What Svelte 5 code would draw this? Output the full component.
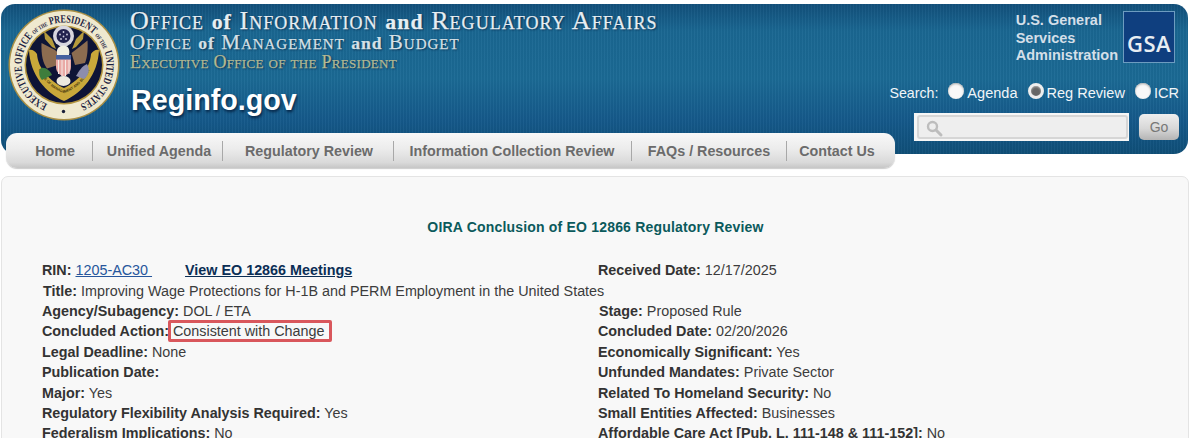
<script>
  const nav = [
    { label: 'Home', width: 86, inset: 12 },
    { label: 'Unified Agenda', width: 130, inset: 3 },
    { label: 'Regulatory Review', width: 171, inset: 2 },
    { label: 'Information Collection Review', width: 238, inset: -1 },
    { label: 'FAQs / Resources', width: 155, inset: 0 },
    { label: 'Contact Us', width: 109, inset: -8 }
  ];
  const left = [
    ['Legal Deadline:', 'None'],
    ['Publication Date:', ''],
    ['Major:', 'Yes'],
    ['Regulatory Flexibility Analysis Required:', 'Yes'],
    ['Federalism Implications:', 'No']
  ];
  const right = [
    ['Economically Significant:', 'Yes'],
    ['Unfunded Mandates:', 'Private Sector'],
    ['Related To Homeland Security:', 'No'],
    ['Small Entities Affected:', 'Businesses'],
    ['Affordable Care Act [Pub. L. 111-148 & 111-152]:', 'No']
  ];
  const rows = left.map((l, i) => [l, right[i]]);
</script>

<div class="page">
  <header class="banner">
    <div class="brand">
      <svg class="seal" viewBox="0 0 112 112" aria-hidden="true">
        <defs>
          <path id="ringPath" d="M 56 98.5 A 42.5 42.5 0 1 1 56 13.5 A 42.5 42.5 0 1 1 56 98.5" />
          <path id="scrollPath" d="M 27 48 C 29 66 42 80 56 84 C 70 80 83 66 85 48" />
        </defs>
        <circle cx="56" cy="56" r="55.5" fill="#a98f45" />
        <circle cx="56" cy="56" r="54" fill="#efe9cf" />
        <circle cx="56" cy="56" r="39.5" fill="#b3953f" />
        <circle cx="56" cy="56" r="38" fill="#0e1436" />
        <text class="ring"><textPath href="#ringPath" startOffset="17" textLength="233" lengthAdjust="spacingAndGlyphs">EXECUTIVE OFFICE <tspan class="tiny">OF THE</tspan> PRESIDENT <tspan class="tiny">OF THE</tspan> UNITED STATES</textPath></text>
        <circle cx="55.5" cy="102.5" r="1.7" fill="#1a1f3a" />
        <path d="M21 41 C22 66 38 84 56 92 C74 84 90 66 91 41 C88 40 85 42 83 45 C82 60 70 72 56 79 C42 72 30 60 29 45 C27 42 24 40 21 41 Z" fill="#c9a83a" />
        <text class="scrolltext"><textPath href="#scrollPath" startOffset="50%" text-anchor="middle">OFFICE OF MANAGEMENT AND BUDGET</textPath></text>
        <path d="M36 22 L44 30 L48 40 L44 38 L37 30 Z" fill="#b59a3c" />
        <path d="M76 22 L68 30 L64 40 L68 38 L75 30 Z" fill="#b59a3c" />
        <circle cx="55.5" cy="27" r="10.5" fill="#d8d6df" />
        <circle cx="55.5" cy="27" r="7" fill="#23234e" />
        <g fill="#cfcfe0">
          <circle cx="55.5" cy="23" r=".9" /><circle cx="52" cy="25.5" r=".9" /><circle cx="59" cy="25.5" r=".9" />
          <circle cx="53" cy="30" r=".9" /><circle cx="58" cy="30" r=".9" /><circle cx="55.5" cy="27.5" r=".9" />
        </g>
        <path d="M33.5 34 L47 41 L52 46 L50 56 L39 59.5 C35 54 33 46 33.5 34 Z" fill="#8c6c50" />
        <path d="M79.5 31.5 L72 37.5 L63.5 44 L67 56 L77 54 C79.5 48 80 40 79.5 31.5 Z" fill="#8c6c50" />
        <path d="M49 44 C48 38 54 35 58 37 C61 38 62 42 61 46 L49 46 Z" fill="#f1eee2" />
        <path d="M48 46 H63 V58 C63 63 59 66 55.5 68 C52 66 48 63 48 58 Z" fill="#e9aaa6" />
        <path d="M48 46 H63 V50.5 H48 Z" fill="#46609f" />
        <path d="M50.5 51 V65 M54 51 V67 M57.5 51 V67 M61 51 V65" stroke="#f5e9e4" stroke-width="1" />
        <path d="M33 59 C30 62 31 68 34 71 L40 68 L44 66 C42 62 38 58 33 59 Z" fill="#3e7d3c" />
        <path d="M79 55 C82 60 81 66 76 70 L68 67 C71 62 74 57 79 55 Z" fill="#8d8dac" />
        <ellipse cx="55.5" cy="72" rx="7" ry="5" fill="#ece9df" />
      </svg>
      <div class="titles">
        <div class="t1">Office <b>of</b> Information <b>and</b> Regulatory Affairs</div>
        <div class="t2">Office <b>of</b> Management <b>and</b> Budget</div>
        <div class="t3">Executive Office of the President</div>
        <div class="site">Reginfo.gov</div>
      </div>
    </div>
    <div class="tools">
      <div class="gsa">
        <div class="gsa-name">U.S. General<br />Services<br />Administration</div>
        <div class="gsa-logo">GSA</div>
      </div>
      <div class="radios">
        <span class="lead">Search:</span>
        <span class="dot"></span><span class="opt">Agenda</span>
        <span class="dot on"></span><span class="opt">Reg Review</span>
        <span class="dot"></span><span class="opt last">ICR</span>
      </div>
      <div class="searchrow">
        <div class="field">
          <div class="inset">
            <svg width="19" height="19" viewBox="0 0 19 19" aria-hidden="true">
              <circle cx="7.5" cy="7.5" r="4.5" fill="none" stroke="#bdbdbd" stroke-width="2.4" />
              <path d="M11 11 L16 16" stroke="#bdbdbd" stroke-width="3" stroke-linecap="round" />
            </svg>
          </div>
        </div>
        <div class="go">Go</div>
      </div>
    </div>
  </header>

  <nav class="menu">
    {#each nav as item, i}
      <span class="item" class:first={i === 0} style="width:{item.width}px;padding-left:{Math.max(item.inset, 0)}px;padding-right:{Math.max(-item.inset, 0)}px">{item.label}</span>
    {/each}
  </nav>

  <main class="panel">
    <h1>OIRA Conclusion of EO 12866 Regulatory Review</h1>
    <div class="grid">
      <div class="cell"><b>RIN:</b> <a href="#top" class="rin">1205-AC30&nbsp;</a><a href="#top" class="meet">View EO 12866 Meetings</a></div>
      <div class="cell"><b>Received Date:</b> 12/17/2025</div>
      <div class="cell wide nudge"><b>Title:</b> Improving Wage Protections for H-1B and PERM Employment in the United States</div>
      <div class="cell"><b>Agency/Subagency:</b> DOL / ETA</div>
      <div class="cell nudge"><b>Stage:</b> Proposed Rule</div>
      <div class="cell"><b>Concluded Action:</b> <span class="mark">Consistent with Change</span></div>
      <div class="cell"><b>Concluded Date:</b> 02/20/2026</div>
      {#each rows as [l, r]}
        <div class="cell"><b>{l[0]}</b> {l[1]}</div>
        <div class="cell"><b>{r[0]}</b> {r[1]}</div>
      {/each}
    </div>
  </main>
</div>

<style>
  :global(html), :global(body) { margin: 0; background: #fff; overflow: hidden; }
  .page { width: 1190px; height: 438px; overflow: hidden; padding-top: 4px; box-sizing: border-box; font-family: "Liberation Sans", Arial, sans-serif; }

  .banner {
    margin: 0 2px 0 1px;
    height: 150px;
    box-sizing: border-box;
    border-radius: 14px;
    background:
      repeating-linear-gradient(90deg, rgba(255,255,255,.03) 0 1px, rgba(0,0,0,.03) 1px 3px),
      linear-gradient(180deg, #12507b 0, #1a6792 18%, #1b6a95 50%, #15598a 78%, #0f4f78 100%);
    display: flex;
    justify-content: space-between;
  }
  .brand { display: flex; padding: 5px 0 0 7px; }
  .seal { width: 112px; height: 112px; flex: none; }
  .ring { font: 700 11px "Liberation Serif", serif; fill: #1a2040; }
  .ring .tiny { font-size: 6px; }
  .scrolltext { font: 700 3.6px "Liberation Sans", sans-serif; fill: #4a3a10; }
  .titles { margin-left: 10px; font-family: "Liberation Serif", serif; font-variant: small-caps; }
  .t1, .t2, .t3 { white-space: nowrap; text-shadow: 1px 1px 2px rgba(0,20,50,.75); -webkit-text-stroke: .25px currentColor; }
  .titles b { font-variant: normal; font-size: .84em; }
  .t1 { font-size: 26px; line-height: 24px; color: #e6eef3; letter-spacing: 1.05px; }
  .t2 { font-size: 21px; line-height: 20px; color: #d5e0e6; letter-spacing: 1px; margin-top: -2px; }
  .t3 { font-size: 18px; line-height: 18px; color: #b3b892; letter-spacing: .3px; margin-top: 0; }
  .site { font: 700 28.7px/34px "Liberation Sans", sans-serif; color: #fff; margin-top: 12px; margin-left: 1px; font-variant: normal; text-shadow: 1px 2px 3px rgba(0,20,50,.8); }

  .tools { display: flex; flex-direction: column; align-items: flex-end; width: 310px; padding-right: 9px; box-sizing: border-box; }
  .gsa { display: flex; align-items: flex-start; margin-top: 7px; margin-right: 4px; }
  .gsa-name { font-weight: 700; font-size: 14.5px; line-height: 17.5px; color: #d4dfe8; margin-top: 1px; }
  .gsa-logo {
    width: 52px; height: 52px; margin-left: 5px; box-sizing: border-box;
    border: 1px solid #6d9cc0; background: #0f3f7f; color: #e8eef3;
    font: 600 22px/62px "Open Sans", sans-serif; letter-spacing: .5px; text-align: center;
  }
  .radios { display: flex; align-items: center; height: 20px; margin-top: 18px; color: #f1f5f8; font-size: 14.55px; }
  .lead { margin-right: 10px; font-size: 14.2px; }
  .dot { width: 16px; height: 16px; border-radius: 50%; background: #f8f8f8; box-shadow: inset 0 1px 2px #aaa; margin-right: 3px; margin-top: -4px; }
  .dot.on { background: #666; border: 3px solid #eee; box-sizing: border-box; }
  .opt { margin-right: 10px; }
  .opt.last { margin-right: 0; }
  .searchrow { display: flex; align-items: flex-start; margin-top: 10px; }
  .field { width: 215px; height: 28px; background: #f6f6f6; box-sizing: border-box; padding: 2px 1px 2px 3px; }
  .inset { height: 100%; border: 2px solid #d6d6d6; border-radius: 3px; background: #eeeeee; box-sizing: border-box; padding: 2px 0 0 6px; }
  .go {
    width: 40px; height: 26px; margin: 1px 0 0 10px; border-radius: 5px; text-align: center; font-size: 14px; line-height: 26px; color: #777;
    background: linear-gradient(180deg, #eeeeee 0, #d8d8d8 55%, #b4b4b4 100%);
  }

  .menu {
    display: flex; align-items: center; margin: -21px 0 0 6px; width: 889px; height: 35px; position: relative;
    border-radius: 11px; box-sizing: border-box;
    background: linear-gradient(180deg, #f8f8f8 0, #ececec 45%, #d9d9d9 85%, #c6c6c6 100%);
    box-shadow: 0 1px 1px rgba(0,0,0,.2);
  }
  .item { height: 20px; text-align: center; font-size: 14.3px; font-weight: 700; line-height: 20px; color: #6b6b6b; border-left: 1px solid #a8a8a8; box-sizing: border-box; flex: none; white-space: nowrap; }
  .item.first { border-left: 0; }

  .panel {
    margin: 8px 1px 0 1px; height: 300px; box-sizing: border-box; border: 1px solid #e4e4e4; border-radius: 7px; background: #f8f8f8;
    padding: 41px 40px 0 40px;
  }
  h1 { margin: 0; text-align: center; font-size: 14px; line-height: 18px; font-weight: 700; color: #0b5a5c; padding-left: 1px; letter-spacing: .19px; }
  .grid { display: grid; grid-template-columns: 556px 1fr; grid-auto-rows: 20.4px; margin-top: 24.3px; font-size: 14.35px; line-height: 20px; color: #3c3c3c; }
  .cell { white-space: nowrap; }
  .cell.wide { grid-column: 1 / 3; }
  .cell.nudge { padding-left: 1px; }
  .cell b { color: #333; }
  .rin { color: #27569c; }
  .meet { color: #0b2e55; font-weight: 700; margin-left: 33px; }
  .mark { display: inline-block; position: relative; }
  .mark::after { content: ""; position: absolute; left: -5px; right: -8px; top: -1px; bottom: -1px; border: 3px solid #d9575c; border-radius: 2px; box-sizing: border-box; pointer-events: none; }
</style>
